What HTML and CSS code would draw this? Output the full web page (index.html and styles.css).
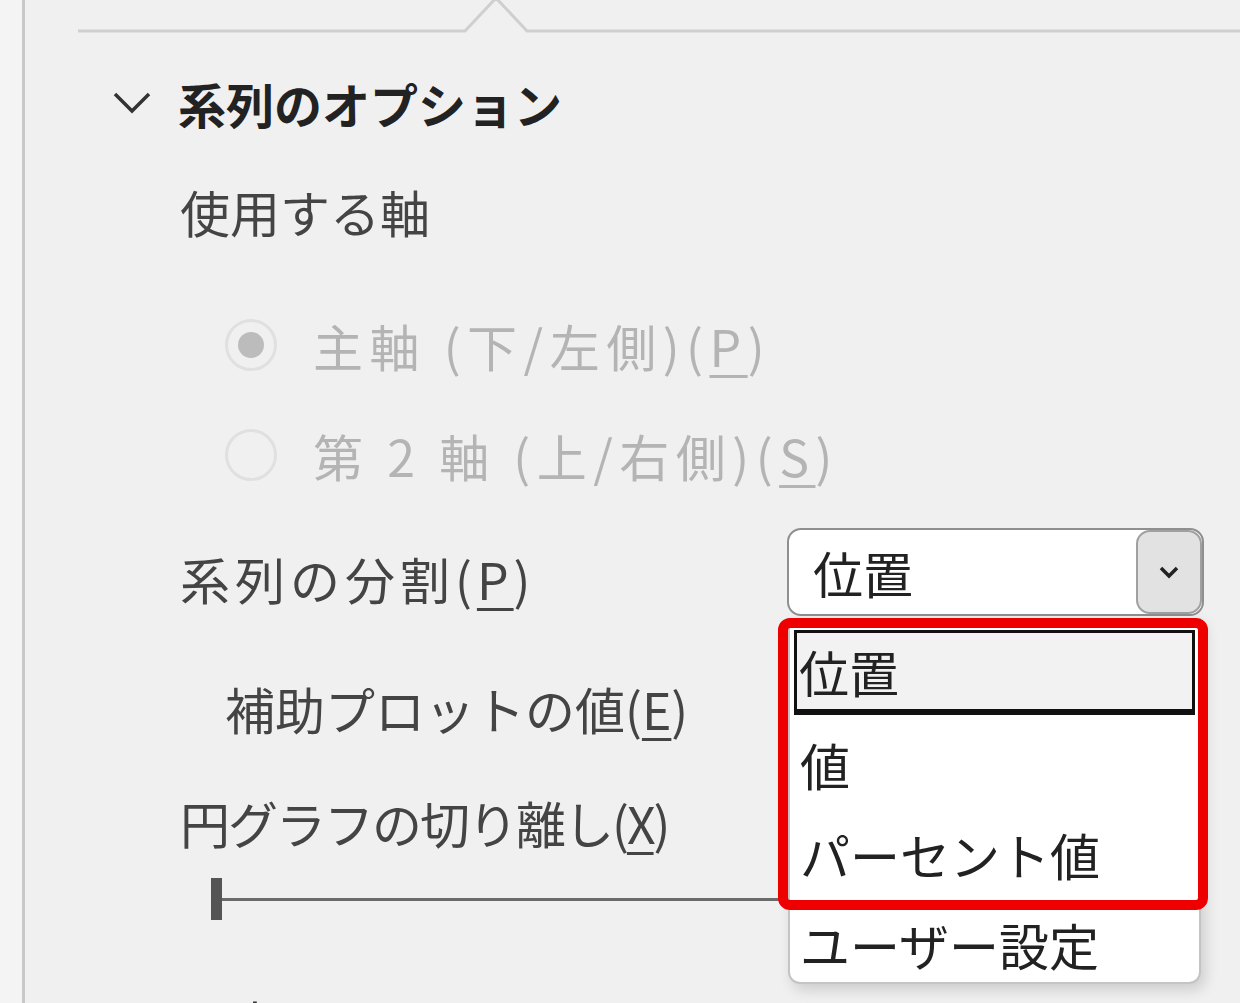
FILE: index.html
```html
<!DOCTYPE html>
<html lang="ja">
	<head>
		<meta charset="utf-8">
		<title>系列のオプション</title>
		<link rel="stylesheet" href="styles.css">
	</head>
	<body>
		<div class="gutter"></div>
		<div class="pane">
			<svg class="tabline" height="40" viewBox="0 0 1162 40" preserveAspectRatio="xMinYMid slice">
				<polyline points="0,31 387,31 418,-2 449,31 1162,31" fill="none" stroke="#cfcfcf" stroke-width="3"/>
			</svg>

			<div class="section-head">
				<svg class="chev" width="40" height="26" viewBox="0 0 40 26">
					<polyline points="3,4 20,21 37,4" fill="none" stroke="#333" stroke-width="3.5"/>
				</svg>
				<span>系列のオプション</span>
			</div>

			<div class="row label">使用する軸</div>

			<div class="radios">
				<div class="radio-row">
					<span class="radio checked"></span>
					<span>主軸 (下/左側)(<u>P</u>)</span>
				</div>
				<div class="radio-row">
					<span class="radio"></span>
					<span>第 2 軸 (上/右側)(<u>S</u>)</span>
				</div>
			</div>

			<div class="split-row">
				<span class="label">系列の分割(<u>P</u>)</span>
				<div class="select">
					<span class="select-value">位置</span>
					<span class="select-btn">
						<svg width="24" height="16" viewBox="0 0 24 16">
							<polyline points="4,4 12,12 20,4" fill="none" stroke="#222" stroke-width="3.5"/>
						</svg>
					</span>
					<ul class="options">
						<li class="active">位置</li>
						<li>値</li>
						<li>パーセント値</li>
						<li>ユーザー設定</li>
					</ul>
					<div class="mark"></div>
				</div>
			</div>

			<div class="row label sub">補助プロットの値(<u>E</u>)</div>

			<div class="row label explode">円グラフの切り離し(<u>X</u>)</div>

			<div class="slider">
				<span class="thumb"></span>
				<span class="track"></span>
			</div>

			<div class="row label next">要素の間隔(<u>W</u>)</div>
		</div>
	</body>
</html>
```

FILE: styles.css
```css
body {
	margin: 0;
	height: 1003px;
	overflow: hidden;
	display: flex;
	background: #f0f0f0;
	font-family: "Noto Sans CJK JP", "Noto Sans", sans-serif;
	color: #444;
}

.gutter {
	width: 22px;
	flex: none;
	background: #f4f4f4;
	border-right: 3px solid #c8c8c8;
}

.pane {
	flex: 1;
	min-width: 0;
	padding-right: 36px;
}

.tabline {
	display: block;
	margin-left: 53px;
	width: calc(100% - 17px);
	height: 40px;
	overflow: visible;
}

.section-head {
	height: 126px;
	display: flex;
	align-items: center;
	padding-left: 87px;
	gap: 26px;
	font-size: 48px;
	font-weight: bold;
	color: #222;
}

.chev {
	flex: none;
}

.row {
	display: flex;
	align-items: center;
	padding-left: 155px;
}

.label {
	font-size: 50px;
	color: #444;
	white-space: nowrap;
}

.label u, .radio-row u {
	text-decoration-thickness: 3px;
	text-underline-offset: 8px;
}

.section-head + .row {
	height: 90px;
}

.radios {
	padding-top: 34px;
	padding-left: 200px;
	color: #b4b4b4;
	font-size: 50px;
	letter-spacing: 6.5px;
	white-space: nowrap;
}

.radio-row {
	height: 110px;
	display: flex;
	align-items: center;
	gap: 36px;
}

.radio {
	width: 46px;
	height: 46px;
	border: 3px solid #e0e0e0;
	border-radius: 50%;
	display: flex;
	align-items: center;
	justify-content: center;
	flex: none;
}

.radio.checked::after {
	content: "";
	width: 26px;
	height: 26px;
	border-radius: 50%;
	background: #bcbcbc;
}

.split-row {
	margin-top: 18px;
	height: 88px;
	display: flex;
	align-items: center;
	padding-left: 155px;
}

.split-row .label {
	padding-top: 12px;
	letter-spacing: 5px;
}

.select {
	margin-left: auto;
	position: relative;
	flex: none;
	width: 389px;
	height: 84px;
	background: #fff;
	border: 2px solid #8f8f8f;
	border-radius: 14px;
	display: flex;
	align-items: center;
	justify-content: space-between;
	padding-left: 24px;
	font-size: 50px;
	color: #222;
}

.select-btn {
	width: 62px;
	height: 80px;
	background: #e2e2e2;
	border: 2px solid #a0a0a0;
	border-radius: 14px;
	display: flex;
	align-items: center;
	justify-content: center;
}

.options {
	position: absolute;
	top: 88px;
	left: -1px;
	width: 413px;
	height: 366px;
	margin: 0;
	padding: 12px 4px 0 4px;
	box-sizing: border-box;
	list-style: none;
	background: #fff;
	border: 2px solid #c4c4c4;
	border-top: none;
	border-radius: 0 0 12px 12px;
	box-shadow: 4px 6px 14px rgba(0, 0, 0, 0.15);
	font-size: 50px;
	color: #222;
}

.options li {
	height: 90px;
	display: flex;
	align-items: center;
	padding-left: 6px;
	white-space: nowrap;
}

.options li.active {
	height: 76px;
	padding-left: 2px;
	margin-bottom: 4px;
	background: #f2f2f2;
	border: 3px solid #111;
	border-bottom-width: 6px;
}

.mark {
	position: absolute;
	top: 88px;
	left: -11px;
	width: 410px;
	height: 272px;
	border: 10px solid #ee0000;
	border-radius: 12px;
}

.sub {
	margin-top: 36px;
	height: 112px;
	padding-left: 200px;
}

.explode {
	margin-top: 18px;
	height: 80px;
	letter-spacing: -2px;
}

.slider {
	height: 74px;
	display: flex;
	align-items: center;
	padding-left: 186px;
}

.thumb {
	width: 11px;
	height: 42px;
	background: #555;
	flex: none;
}

.track {
	width: 600px;
	height: 3px;
	background: #6a6a6a;
}

.next {
	margin-top: 50px;
	height: 72px;
	color: #333;
}
```
